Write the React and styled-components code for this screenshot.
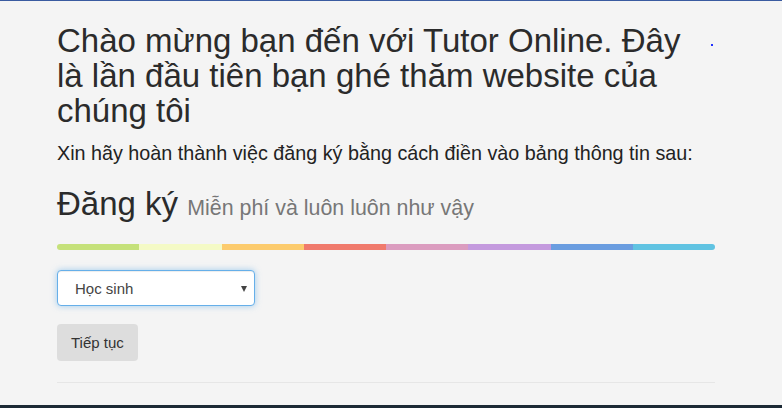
import React from 'react'
import styled, { createGlobalStyle } from 'styled-components'

const GlobalStyle = createGlobalStyle`
  html, body {
    margin: 0;
    padding: 0;
    background: #f4f4f4;
    font-family: "Liberation Sans", Arial, sans-serif;
    color: #333;
  }
`

const Page = styled.div`
  position: relative;
  height: 408px;
  overflow: hidden;
  border-top: 1px solid #3a5ba0;
  box-sizing: border-box;
  display: flex;
  flex-direction: column;
`

const Main = styled.main`
  width: 658px;
  padding: 0 0 0 57px;
  height: 404px;
  flex-shrink: 0;
  box-sizing: content-box;
  display: flow-root;
`

const Heading = styled.h2`
  font-size: 33px;
  font-weight: 400;
  line-height: 35px;
  margin: 22px 0 0;
  color: #2b2b2b;
  width: 650px;
`

const Lead = styled.p`
  font-size: 19.75px;
  line-height: 22px;
  margin: 14px 0 0;
  color: #222;
`

const Title = styled.h1`
  font-size: 33px;
  font-weight: 400;
  line-height: 40px;
  margin: 20px 0 0;
  color: #2b2b2b;
`

const Small = styled.small`
  font-size: 21.4px;
  color: #777;
`

const ColorBar = styled.div`
  display: flex;
  height: 6px;
  margin-top: 16px;
  border-radius: 3px;
  overflow: hidden;
`

const Stripe = styled.span`
  flex: 1;
  background: ${p => p.$c};
`

const Select = styled.div`
  margin-top: 20px;
  width: 198px;
  height: 36px;
  box-sizing: border-box;
  background: #fff;
  border: 1px solid #66afe9;
  border-radius: 4px;
  box-shadow: inset 0 1px 1px rgba(0,0,0,.075), 0 0 6px rgba(102,175,233,.6);
  display: flex;
  align-items: center;
  justify-content: space-between;
  padding: 0 7px 0 17px;
  font-size: 15px;
  color: #444;
`

const Caret = styled.span`
  width: 0;
  height: 0;
  border-left: 3.5px solid transparent;
  border-right: 3.5px solid transparent;
  border-top: 6px solid #444;
  margin-top: 1px;
`

const Button = styled.button`
  display: block;
  margin-top: 18px;
  height: 37px;
  padding: 0 14px;
  border: none;
  border-radius: 4px;
  background: #dddddd;
  font-family: inherit;
  font-size: 15px;
  color: #333;
`

const Rule = styled.hr`
  margin: 21px 0 0;
  border: none;
  border-top: 1px solid #e6e6e6;
`

const Footer = styled.footer`
  height: 3px;
  flex-shrink: 0;
  background: #1c2a35;
`

const Dot = styled.span`
  position: absolute;
  left: 711px;
  top: 43px;
  width: 2px;
  height: 2px;
  background: #2030ff;
`

const colors = ['#c5e17a', '#f4fac6', '#fccb6d', '#f07a6c', '#db9cbf', '#c49ade', '#6a9de0', '#60c3e2']

export default function App() {
  return (
    <Page>
      <GlobalStyle />
      <Main>
        <Heading>Chào mừng bạn đến với Tutor Online. Đây là lần đầu tiên bạn ghé thăm website của chúng tôi</Heading>
        <Lead>Xin hãy hoàn thành việc đăng ký bằng cách điền vào bảng thông tin sau:</Lead>
        <Title>Đăng ký <Small>Miễn phí và luôn luôn như vậy</Small></Title>
        <ColorBar>
          {colors.map(c => <Stripe key={c} $c={c} />)}
        </ColorBar>
        <Select>
          <span>Học sinh</span>
          <Caret />
        </Select>
        <Button>Tiếp tục</Button>
        <Rule />
      </Main>
      <Footer />
      <Dot />
    </Page>
  )
}
